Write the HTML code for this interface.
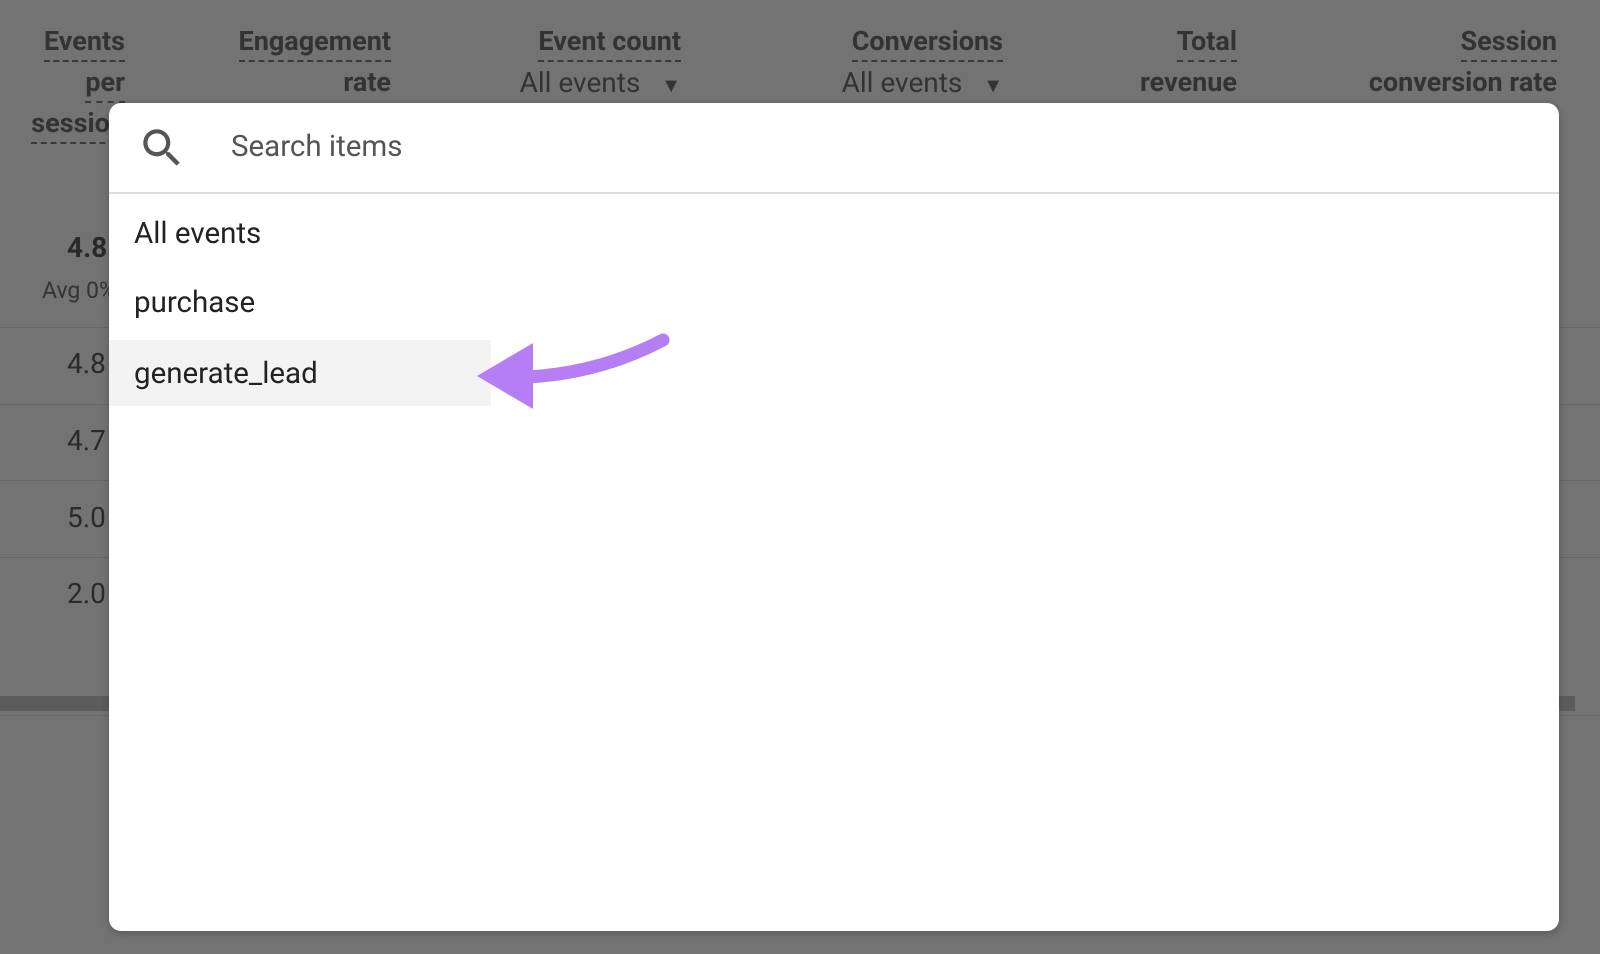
<!DOCTYPE html>
<html><head><meta charset="utf-8"><style>
*{margin:0;padding:0;box-sizing:border-box}
body{width:1600px;height:954px;overflow:hidden;background:#737373;font-family:"Roboto","Liberation Sans",sans-serif;position:relative;color:#2b2b2b}
.h{position:absolute;font-size:27px;font-weight:bold;line-height:41px;text-align:right;color:#333}
.h span.u{border-bottom:2px dashed #3a3a3a;padding-bottom:3px}
.h .n{font-weight:normal;color:#333;font-size:28px}
.v{position:absolute;font-size:28px;color:#2a2a2a}
.line{position:absolute;left:0;width:1600px;height:1px;background:#666}
.panel{position:absolute;left:109px;top:103px;width:1450px;height:828px;background:#fff;border-radius:12px;box-shadow:0 2px 8px rgba(0,0,0,.25)}
.item{position:absolute;left:25px;font-size:29.5px;color:#222}
</style></head><body>
<div class="h" style="right:1475px;top:21px"><span class="u">Events</span><br><span class="u">per</span><br><span class="u">session</span></div>
<div class="h" style="right:1209px;top:21px"><span class="u">Engagement</span><br>rate</div>
<div class="h" style="right:919px;top:21px"><span class="u">Event count</span><br><span class="n">All events &nbsp;&nbsp;<span style="font-size:20px">▼</span></span></div>
<div class="h" style="right:597px;top:21px"><span class="u">Conversions</span><br><span class="n">All events &nbsp;&nbsp;<span style="font-size:20px">▼</span></span></div>
<div class="h" style="right:363px;top:21px"><span class="u">Total</span><br>revenue</div>
<div class="h" style="right:43px;top:21px"><span class="u">Session</span><br>conversion rate</div>
<div class="v" style="left:67px;top:231px;font-weight:bold">4.8</div>
<div class="v" style="left:42px;top:277px;font-size:23px;color:#333">Avg 0%</div>
<div class="line" style="top:327px"></div>
<div class="v" style="left:67px;top:347px">4.8</div>
<div class="line" style="top:404px"></div>
<div class="v" style="left:67px;top:424px">4.7</div>
<div class="line" style="top:480px"></div>
<div class="v" style="left:67px;top:501px">5.0</div>
<div class="line" style="top:557px"></div>
<div class="v" style="left:67px;top:577px">2.0</div>
<div style="position:absolute;left:0;top:696px;width:1575px;height:15px;background:#5c5c5c"></div>
<div class="line" style="top:715px;background:#6a6a6a"></div>
<div class="panel">
<svg style="position:absolute;left:28px;top:20px" width="50" height="50" viewBox="0 0 24 24"><path fill="#555" d="M15.5 14h-.79l-.28-.27A6.47 6.47 0 0 0 16 9.5 6.5 6.5 0 1 0 9.5 16c1.61 0 3.09-.59 4.23-1.57l.27.28v.79l5 4.99L20.49 19l-4.99-5zm-6 0C7.01 14 5 11.99 5 9.5S7.01 5 9.5 5 14 7.01 14 9.5 11.99 14 9.5 14z"/></svg>
<div style="position:absolute;left:122px;top:27px;font-size:29.5px;color:#555">Search items</div>
<div style="position:absolute;left:0;top:89px;width:100%;height:2px;background:#dcdcdc"></div>
<div class="item" style="top:114px">All events</div>
<div class="item" style="top:183px">purchase</div>
<div style="position:absolute;left:0;top:237px;width:382px;height:66px;background:#f3f3f3"></div>
<div class="item" style="top:254px">generate_lead</div>
</div>
<svg style="position:absolute;left:0;top:0" width="1600" height="954"><path d="M528 377 C580 374 625 360 663 340" stroke="#b57ef5" stroke-width="13" fill="none" stroke-linecap="round"/><path d="M477 376 L533 343 L533 409 Z" fill="#b57ef5"/></svg>
</body></html>
